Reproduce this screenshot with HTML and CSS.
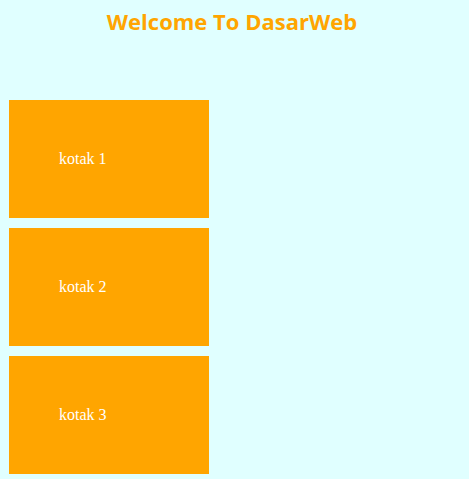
FILE: index.html
```html
<!DOCTYPE html>
<html>
<head>
<meta charset="utf-8">
<link rel="stylesheet" href="styles.css">
</head>
<body>
<h1 class="title">Welcome To DasarWeb</h1>
<div class="boxes">
  <div class="kotak">kotak 1</div>
  <div class="kotak">kotak 2</div>
  <div class="kotak">kotak 3</div>
</div>
</body>
</html>
```
FILE: styles.css
```css
html, body {
  background: #e0ffff;
}
body {
  margin: 0;
  padding: 0 0 0 9px;
  font-family: "Liberation Serif", serif;
}
.title {
  margin: 0;
  padding-top: 8px;
  padding-right: 14px;
  height: 100px;
  box-sizing: border-box;
  text-align: center;
  font-family: "Open Sans", sans-serif;
  font-weight: 700;
  font-size: 22px;
  line-height: 26px;
  color: #ffa500;
}
.boxes {
  display: flex;
  flex-direction: column;
  gap: 10px;
}
.kotak {
  width: 100px;
  padding: 50px;
  background: #ffa500;
  color: #ffffff;
  font-size: 16px;
  line-height: 18px;
}
```
